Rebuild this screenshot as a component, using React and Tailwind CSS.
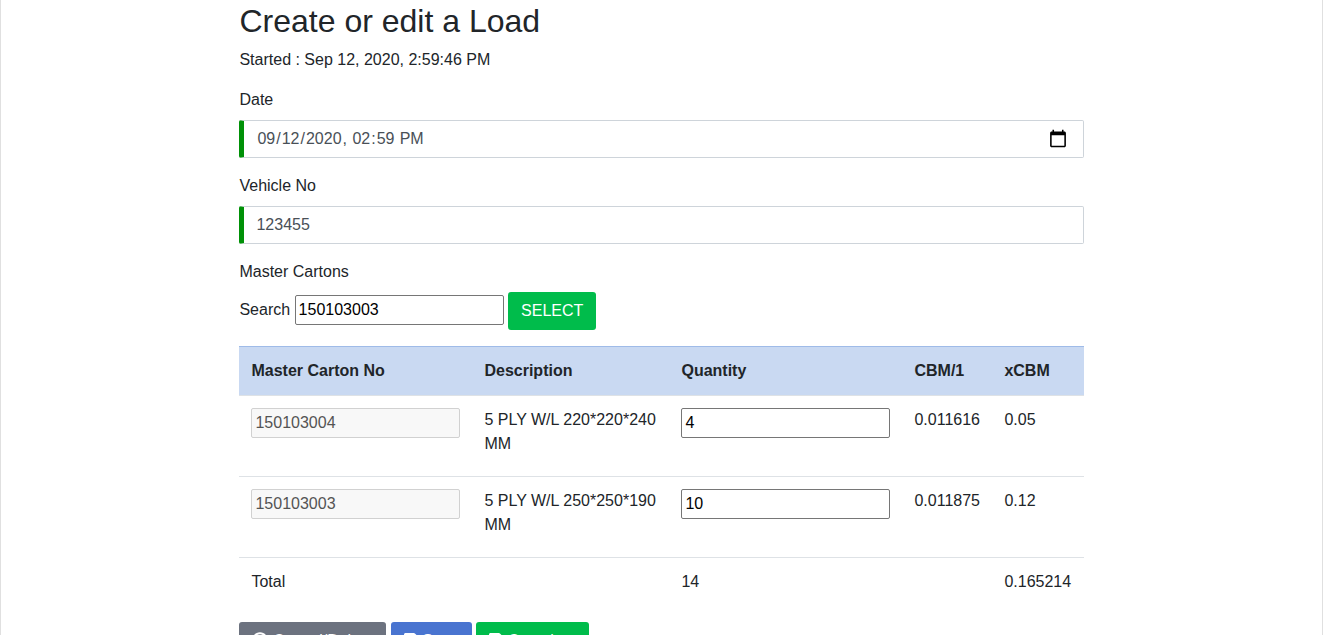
import { useState } from "react";
import { FaBan, FaSave } from "react-icons/fa";

const rows = [
  { id: "150103004", description: "5 PLY W/L 220*220*240 MM", quantity: "4", cbm: "0.011616", total: "0.05" },
  { id: "150103003", description: "5 PLY W/L 250*250*190 MM", quantity: "10", cbm: "0.011875", total: "0.12" },
];

const control =
  "w-full h-[38px] rounded-[2px] border border-l-[5px] border-[#ced4da] border-l-[#009107] bg-white px-3 py-1.5 text-[#495057] [&::-webkit-calendar-picker-indicator]:mr-[3px] [&::-webkit-calendar-picker-indicator]:h-[20px] [&::-webkit-calendar-picker-indicator]:w-[20px] [&::-webkit-calendar-picker-indicator]:bg-contain [&::-webkit-calendar-picker-indicator]:p-0";
const plain =
  "w-[209px] h-[30px] rounded-[2px] border border-[#767676] bg-white px-[3px] py-0.5 text-black disabled:border-[#d1d1d1] disabled:bg-[#f8f8f8] disabled:text-[#545454]";
const button = "inline-block h-[38px] rounded-[3px] px-[13px] align-middle text-white";
const icon = "inline-block align-[-2px]";

export default function App() {
  const [date, setDate] = useState("2020-09-12T14:59");
  const [vehicle, setVehicle] = useState("123455");
  const [search, setSearch] = useState("150103003");

  return (
    <main className="h-screen overflow-hidden border-x border-[#e0e0e0] bg-white font-['Liberation_Sans',Arial,sans-serif] text-base leading-6 text-[#212529]">
      <form className="mx-auto w-[63.9%]" onSubmit={(e) => e.preventDefault()}>
        <h2 className="mb-2 pt-[2px] text-[32px] leading-[38px]">Create or edit a Load</h2>
        <p className="mb-4">Started : Sep 12, 2020, 2:59:46 PM</p>

        <div className="mb-4">
          <label htmlFor="date" className="mb-2 block">Date</label>
          <input id="date" type="datetime-local" className={control} value={date} onChange={(e) => setDate(e.target.value)} />
        </div>
        <div className="mb-4">
          <label htmlFor="vehicle" className="mb-2 block">Vehicle No</label>
          <input id="vehicle" type="text" className={control} value={vehicle} onChange={(e) => setVehicle(e.target.value)} />
        </div>

        <h3 className="mb-2">Master Cartons</h3>
        <div className="mb-4">
          <label htmlFor="search">Search</label>{" "}
          <input id="search" type="text" className={plain} value={search} onChange={(e) => setSearch(e.target.value)} />{" "}
          <button type="button" className={`${button} bg-[#00bc4b]`}>SELECT</button>
        </div>

        <table className="mb-4 w-full border-collapse text-left">
          <thead>
            <tr className="border-t border-[#9fbbe8] bg-[#c9d9f2]">
              <th className="w-[233px] p-3">Master Carton No</th>
              <th className="w-[197px] p-3">Description</th>
              <th className="w-[233px] p-3">Quantity</th>
              <th className="p-3">CBM/1</th>
              <th className="p-3">xCBM</th>
            </tr>
          </thead>
          <tbody className="align-top">
            {rows.map((row) => (
              <tr key={row.id} className="h-[81px] border-t border-[#dee2e6]">
                <td className="p-3">
                  <input aria-label="Master carton number" className={plain} value={row.id} disabled readOnly />
                </td>
                <td className="p-3">{row.description}</td>
                <td className="p-3">
                  <input aria-label="Quantity" className={plain} defaultValue={row.quantity} />
                </td>
                <td className="p-3">{row.cbm}</td>
                <td className="p-3">{row.total}</td>
              </tr>
            ))}
            <tr className="border-t border-[#dee2e6]">
              <td className="p-3">Total</td>
              <td className="p-3"></td>
              <td className="p-3">14</td>
              <td className="p-3"></td>
              <td className="p-3">0.165214</td>
            </tr>
          </tbody>
        </table>

        <div>
          <button type="button" className={`${button} bg-[#6c727f]`}>
            <FaBan className={icon} /> Cancel/Delete
          </button>{" "}
          <button type="submit" className={`${button} bg-[#4974d0]`}>
            <FaSave className={`${icon} w-[14px]`} /> Save
          </button>{" "}
          <button type="button" className={`${button} bg-[#00bc4b]`}>
            <FaSave className={`${icon} w-[14px]`} /> Complete
          </button>
        </div>
      </form>
    </main>
  );
}
